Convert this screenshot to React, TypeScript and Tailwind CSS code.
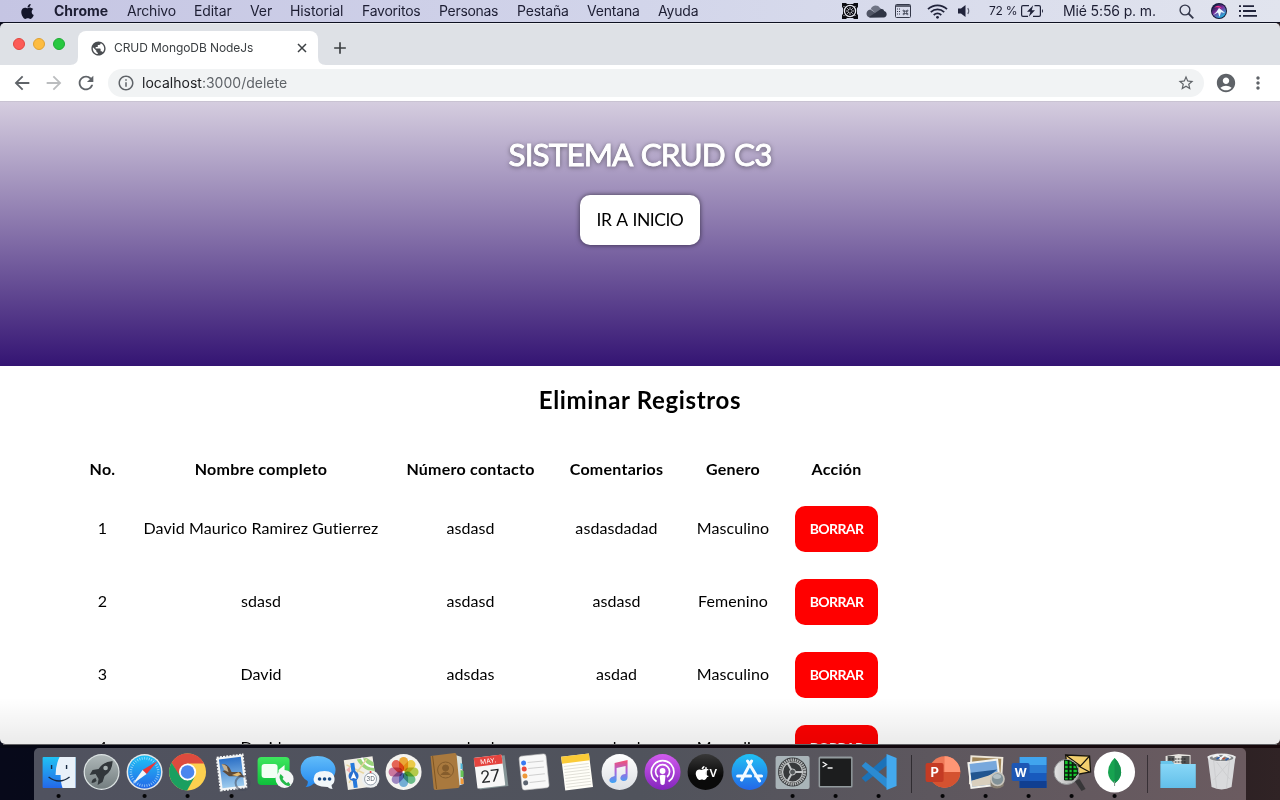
import type { ReactNode } from 'react';
import { FaApple } from 'react-icons/fa';
import {
  MdPublic, MdArrowBack, MdArrowForward, MdRefresh, MdInfoOutline, MdStarBorder,
  MdAccountCircle, MdMoreVert, MdAdd,
} from 'react-icons/md';

const menus = [
  { label: 'Archivo', cls: 'w-[67px] tracking-[-0.2px]' },
  { label: 'Editar', cls: 'w-[56px] tracking-[-0.1px]' },
  { label: 'Ver', cls: 'w-[40px] tracking-[-0.1px]' },
  { label: 'Historial', cls: 'w-[72px] tracking-[-0.1px]' },
  { label: 'Favoritos', cls: 'w-[77px] tracking-[-0.25px]' },
  { label: 'Personas', cls: 'w-[78px] tracking-[-0.3px]' },
  { label: 'Pestaña', cls: 'w-[70px] tracking-[-0.2px]' },
  { label: 'Ventana', cls: 'w-[71px] tracking-[-0.2px]' },
  { label: 'Ayuda', cls: 'w-[60px] tracking-[-0.2px]' },
];

function MenuBar() {
  return (
    <div className="flex h-[22px] shrink-0 items-center bg-linear-to-r from-[#c5c5e3] via-[#d2d5ea] to-[#e1e4ee] text-[14px] leading-[22px] text-[#1d1e33]">
      <div className="flex w-[54px] shrink-0 pl-[20px]">
        <FaApple className="h-[17px] w-[15px] text-[#14162a]" />
      </div>
      <div className="w-[73px] shrink-0 font-bold">Chrome</div>
      {menus.map((m) => (
        <div key={m.label} className={`shrink-0 whitespace-nowrap ${m.cls}`}>{m.label}</div>
      ))}
      <div className="flex flex-1 items-center">
        <svg className="ml-[124px] h-4 w-4 shrink-0" viewBox="0 0 16 16">
          <path d="M0 0h4l1 1h6l1-1h4v4l-1 1v6l1 1v4h-4l-1-1H5l-1 1H0v-4l1-1V5L0 4z" fill="#0c0c12" />
          <circle cx="8" cy="8" r="5.600" fill="none" stroke="#e8e9f2" strokeWidth="1.300" />
          <path d="M8 4v8M4 8h8M5.200 5.200l5.600 5.600M10.800 5.200l-5.600 5.600" stroke="#e8e9f2" strokeWidth=".8" />
          <path d="M1.500 4l1-1M13.500 4l-1-1M1.500 12l1 1M13.500 12l-1 1" stroke="#e8e9f2" strokeWidth=".8" />
          <circle cx="8" cy="8" r="1.300" fill="#0c0c12" />
        </svg>
        <svg className="ml-[8px] h-[14px] w-[21px] shrink-0" viewBox="0 0 21 14">
          <path d="M4.800 5C6 .8 12 .2 14 4l3 2-5 5z" fill="#6f7484" />
          <path d="M4 13.500C-.6 13-.8 6.500 4.300 5.500L16 13z" fill="#505565" />
          <path d="M3 13l12-8c2-.2 2.900.700 3.100 2 4 1 3 6.500-.5 6.500H4z" fill="#2f3444" />
        </svg>
        <svg className="ml-[8px] h-[14px] w-4 shrink-0" viewBox="0 0 16 14" fill="none" stroke="#343849">
          <rect x=".5" y=".5" width="15" height="13" rx="1" />
          <path d="M1 2h14" strokeWidth="1.500" />
          <path d="M2 5h4M2 7.500h3M2 10h3" strokeDasharray="1 1" />
          <path d="M9.300 7.200h2.400v2.400H9.300z" strokeWidth=".8" />
          <path d="M9.300 7.200H8.100a.7.700 0 1 1 1.200-.8zM11.700 7.200v-.8a.7.700 0 1 1 1.200.8zM9.300 9.600v.8a.7.700 0 1 1-1.200-.8zM11.700 9.600h1.200a.7.700 0 1 1-1.200.8z" strokeWidth=".8" />
        </svg>
        <svg className="ml-[16px] h-[15px] w-[21px] shrink-0" viewBox="0 0 21 15" fill="none" stroke="#20233a" strokeWidth="1.800">
          <path d="M1 5.200C6.500.2 14.500.2 20 5.200M3.800 8.100c4-3.600 9.400-3.600 13.400 0M6.700 11c2.300-2 5.300-2 7.600 0" />
          <circle cx="10.500" cy="13.300" r="1.400" fill="#20233a" stroke="none" />
        </svg>
        <svg className="ml-[9px] h-[14px] w-[16px] shrink-0" viewBox="0 0 16 14">
          <path d="M1 4.500h3L8.500 1v12L4 9.500H1z" fill="#20233a" />
          <path d="M10.800 4q2 3 0 6" fill="none" stroke="#5b5f70" strokeWidth="1.100" />
        </svg>
        <div className="ml-[16px] w-[32px] shrink-0 whitespace-nowrap text-[12px] tracking-[-0.25px]">72 %</div>
        <svg className="h-3 w-[23px] shrink-0" viewBox="0 0 23 12">
          <path d="M8 .6H2Q.6.600.6 2v8q0 1.400 1.400 1.400h5M13.500.6H18q1.400 0 1.400 1.400v8q0 1.400-1.400 1.400h-6" fill="none" stroke="#20233a" strokeWidth="1.200" />
          <path d="M12.200.3 6 6.700h3.400L7.800 11.700 14 5.200h-3.300z" fill="#20233a" />
          <path d="M21 4q2 2 0 4z" fill="#20233a" />
        </svg>
        <div className="ml-[19px] w-[116px] shrink-0 whitespace-nowrap tracking-[-0.13px]">Mié 5:56 p. m.</div>
        <svg className="h-[15px] w-[15px] shrink-0" viewBox="0 0 15 15" fill="none" stroke="#33374a" strokeWidth="1.400">
          <circle cx="6" cy="6" r="4.900" /><path d="M9.500 9.500 14.300 14.300" strokeWidth="1.800" />
        </svg>
        <svg className="ml-[17px] h-4 w-4 shrink-0" viewBox="0 0 16 16">
          <defs>
            <linearGradient id="siri" x1="0" y1="0" x2=".7" y2="1">
              <stop offset=".2" stopColor="#1d2050" /><stop offset=".5" stopColor="#7b2f9c" /><stop offset="1" stopColor="#20bbe0" />
            </linearGradient>
          </defs>
          <circle cx="8" cy="8" r="8" fill="#14183a" />
          <circle cx="8" cy="8" r="7" fill="url(#siri)" />
          <path d="M3 4.500q5-4 8 1-4-2-8-1z" fill="#ee328c" />
          <path d="M8 5q4 3 6 5l-4-.8L8.500 14 7 9.500 2 12q4-3 6-7z" fill="#e9f8ff" />
        </svg>
        <svg className="ml-[12px] h-[12px] w-[18px] shrink-0" viewBox="0 0 18 12" fill="none" stroke="#20233a">
          <path d="M0 1.200h2M4 1.200h11M0 6h2M4 6h13M0 10.800h2M4 10.800h14" strokeWidth="1.800" />
        </svg>
      </div>
    </div>
  );
}

function TabStrip() {
  return (
    <div className="flex h-[42px] shrink-0 items-end rounded-t-[5px] border-t border-[#eceef0] bg-[#dee1e6]">
      <div className="flex h-full w-[70px] shrink-0 gap-2 pt-[14px] pl-[13px]">
        <span className="h-3 w-3 rounded-full border border-[#e2463f] bg-[#fc5b57]" />
        <span className="h-3 w-3 rounded-full border border-[#dfa133] bg-[#fdbc40]" />
        <span className="h-3 w-3 rounded-full border border-[#1fab34] bg-[#28c840]" />
      </div>
      <svg className="h-2 w-2 shrink-0" viewBox="0 0 8 8"><path d="M8 0v8H0q8 0 8-8z" fill="#fff" /></svg>
      <div className="flex h-[34px] w-[240px] shrink-0 items-center rounded-t-[8px] bg-white text-[12px] text-[#3c4043]">
        <MdPublic className="ml-3 h-[17px] w-[17px] shrink-0 text-[#4a4d51]" />
        <span className="ml-[7px] flex-1 whitespace-nowrap tracking-[-0.08px]">CRUD MongoDB NodeJs</span>
        <svg className="mr-[11px] h-[10px] w-[10px]" viewBox="0 0 10 10"><path d="M1 1l8 8M9 1l-8 8" stroke="#3c4043" strokeWidth="1.500" /></svg>
      </div>
      <svg className="h-2 w-2 shrink-0" viewBox="0 0 8 8"><path d="M0 0v8h8q-8 0-8-8z" fill="#fff" /></svg>
      <MdAdd className="mb-[7px] ml-[4px] h-[20px] w-[20px] shrink-0 text-[#3c4043]" />
    </div>
  );
}

function Toolbar() {
  return (
    <div className="flex h-9 shrink-0 items-center bg-white text-[#5f6368]">
      <MdArrowBack className="ml-[11px] h-[22px] w-[22px] shrink-0" />
      <MdArrowForward className="ml-[10px] h-[22px] w-[22px] shrink-0 text-[#bbbdbf]" />
      <MdRefresh className="ml-[10px] h-[22px] w-[22px] shrink-0" />
      <div className="ml-[11px] flex h-7 w-[1096px] shrink-0 items-center rounded-full bg-[#f1f3f4] text-[14px]">
        <MdInfoOutline className="ml-[9px] h-[18px] w-[18px]" />
        <div className="ml-[7px] flex-1 pb-px tracking-[0.01px]"><span className="text-[#202124]">localhost</span>:3000/delete</div>
        <MdStarBorder className="mr-[9px] h-[18px] w-[18px]" />
      </div>
      <MdAccountCircle className="ml-[11px] h-[22px] w-[22px] shrink-0" />
      <MdMoreVert className="ml-[11px] h-5 w-5 shrink-0" />
    </div>
  );
}

const rows = [
  ['1', 'David Maurico Ramirez Gutierrez', 'asdasd', 'asdasdadad', 'Masculino'],
  ['2', 'sdasd', 'asdasd', 'asdasd', 'Femenino'],
  ['3', 'David', 'adsdas', 'asdad', 'Masculino'],
  ['4', 'David', 'asdasd', 'asdasd', 'Masculino'],
];

function Page() {
  return (
    <main className="relative flex h-[643px] shrink-0 flex-col overflow-hidden rounded-b-[5px] bg-white font-['Lato','Noto_Sans',sans-serif] text-black [font-variant-ligatures:none]">
      <header className="flex h-[265px] shrink-0 flex-col items-center border-t border-[#c9c3d2] bg-linear-to-b/srgb from-[#d5cddf] to-[#341473]">
        <h1 className="mt-[32px] h-[40px] text-[31.5px] leading-[40px] tracking-[-0.9px] whitespace-nowrap text-white [-webkit-text-stroke:0.9px_white] [text-shadow:0_1px_5px_rgba(0,0,0,0.6)] [word-spacing:2px]">SISTEMA CRUD C3</h1>
        <button className="mt-[21px] h-[50px] w-[120px] rounded-[10px] bg-white text-[17.5px] tracking-[-0.5px] whitespace-nowrap shadow-[0_0_5px_rgba(0,0,0,0.6)] [word-spacing:1.5px]">IR A INICIO</button>
      </header>
      <h2 className="mt-[18px] h-8 shrink-0 text-center text-[24px] leading-8 font-bold tracking-[0.65px]">Eliminar Registros</h2>
      <div className="mt-[30px] ml-[76px] text-[16px]">
        <div className="grid h-[46px] grid-cols-[53px_264px_155px_137px_96px_111px] items-center text-center font-bold tracking-[0.25px]">
          {['No.', 'Nombre completo', 'Número contacto', 'Comentarios', 'Genero', 'Acción'].map((h) => <div key={h}>{h}</div>)}
        </div>
        {rows.map((r) => (
          <div key={r[0]} className="grid h-[73px] grid-cols-[53px_264px_155px_137px_96px_111px] items-center text-center">
            {r.map((c, i) => <div key={i} className="pb-[2px] tracking-[0.08px] whitespace-nowrap">{c}</div>)}
            <div className="flex justify-center pt-px">
              <button className="h-[46px] w-[83px] rounded-[10px] bg-[#ff0000] pb-[2px] text-[14px] font-bold tracking-[-0.6px] text-white">BORRAR</button>
            </div>
          </div>
        ))}
      </div>
      <div className="pointer-events-none absolute inset-x-0 bottom-0 h-[46px] bg-linear-to-b from-black/0 to-black/8" />
    </main>
  );
}

function Icon({ children, dot }: { children: ReactNode; dot?: boolean }) {
  return (
    <svg className="h-[52px] w-[43.17px] shrink-0 overflow-visible" viewBox="-21.6 -24 43.2 52">
      {children}
      {dot && <circle cx="0" cy="24" r="2.100" fill="#050507" />}
    </svg>
  );
}

const petals = ['#f5a623', '#f4d03a', '#b5cf3b', '#5fbf84', '#6aaee0', '#9a82c8', '#cf6fa0', '#ee5a4a'];
const spokes = Array.from({ length: 36 }, (_, i) => i * 10);

function Dock() {
  return (
    <div className="flex h-[52px] w-[1212px] shrink-0 rounded-t-[5px] bg-linear-to-r from-[#50525f] via-[#50535c] to-[#6b5b60] pl-[3px] font-['Inter',sans-serif]">
      <svg className="h-0 w-0 shrink-0">
        <defs>
          <linearGradient id="silver" x2="0" y2="1"><stop stopColor="#aeb7b8" /><stop offset="1" stopColor="#747e80" /></linearGradient>
          <linearGradient id="blue" x2="0" y2="1"><stop stopColor="#20c2f4" /><stop offset="1" stopColor="#2468e8" /></linearGradient>
          <linearGradient id="bubble" x2="0" y2="1"><stop stopColor="#62bdfa" /><stop offset="1" stopColor="#2388ef" /></linearGradient>
          <linearGradient id="green" x2="0" y2="1"><stop stopColor="#3ee75e" /><stop offset="1" stopColor="#0fc03b" /></linearGradient>
          <linearGradient id="purple" x2="0" y2="1"><stop stopColor="#d15bee" /><stop offset="1" stopColor="#8425bd" /></linearGradient>
          <linearGradient id="note" x2="0" y2="1"><stop stopColor="#f64f70" /><stop offset=".5" stopColor="#a765de" /><stop offset="1" stopColor="#3ba6f5" /></linearGradient>
          <linearGradient id="folder" x2="0" y2="1"><stop stopColor="#88d7f7" /><stop offset="1" stopColor="#62bfe9" /></linearGradient>
          <linearGradient id="white" x2="0" y2="1"><stop stopColor="#fff" /><stop offset="1" stopColor="#dcdfe4" /></linearGradient>
          <linearGradient id="sky" x2="0" y2="1"><stop stopColor="#2c70c6" /><stop offset="1" stopColor="#9ccbee" /></linearGradient>
          <linearGradient id="black" x2="0" y2="1"><stop stopColor="#383838" /><stop offset=".6" stopColor="#0a0a0a" /></linearGradient>
          <linearGradient id="lens" x2="1" y2="0"><stop stopColor="#e4e4e4" /><stop offset="1" stopColor="#a6a8a8" /></linearGradient>
        </defs>
      </svg>
      <Icon dot>
        <rect x="-16" y="-15" width="33" height="31" rx="1" fill="url(#blue)" />
        <path d="M1-15h16v31H4Q2 11 2 3h-5q0-10 4-18z" fill="#e9f1f9" />
        <path d="M-7-7v4M8-7v4" stroke="#172a42" strokeWidth="1.400" />
        <path d="M-10 5q10.500 8 21 0" fill="none" stroke="#17283e" strokeWidth="1.400" />
      </Icon>
      <Icon>
        <circle r="18" fill="#dce3e3" /><circle r="16.800" fill="url(#silver)" />
        <path d="M11-11q-10 1-14 8l-6 1-3 5 6-1 3 5-1 6 5-3 2-6q8-5 8-15z" fill="#32373b" />
        <circle cx="4" cy="-4" r="2.300" fill="#a7b0b1" /><path d="M-10 11q0-4 4-5l1 3q-2 2-5 2z" fill="#32373b" />
      </Icon>
      <Icon dot>
        <circle r="18" fill="#e5e8e9" /><circle r="16.500" fill="url(#blue)" />
        {spokes.map((a) => <path key={a} d="M0-15v2.500" stroke="#c7ecff" strokeWidth=".6" transform={`rotate(${a})`} />)}
        <path d="M13-11 2 2l-4-4z" fill="#ed3434" /><path d="M-12 12-2-2l4 4z" fill="#f2f5f7" />
      </Icon>
      <Icon dot>
        <circle r="18.500" fill="#fcd04f" />
        <path d="M-16-9.200A18.500 18.500 0 0 1 16.500-8.500H0L-8 5z" fill="#dd4b3e" />
        <path d="M-16-9.200-7 5 0 8.500 7 5-.5 18.500A18.500 18.500 0 0 1-16-9.200z" fill="#1a9f60" />
        <circle r="8.600" fill="#fff" /><circle r="6.800" fill="#4b86ee" />
      </Icon>
      <Icon dot>
        <g transform="rotate(-7)">
          <rect x="-13" y="-16" width="26" height="33" fill="#f3f5f5" stroke="#f3f5f5" strokeWidth="2" strokeDasharray="2 1.200" />
          <rect x="-11" y="-14" width="22" height="29" fill="url(#sky)" />
          <path d="M-9-9q7 0 9 9l9 1 3 6-7-2-8-1-6-6 5-1z" fill="#604b38" />
          <path d="M-9-9q3 0 5 3l1 6-4-3z" fill="#c0af93" /><path d="M0 3 7 1l2 3-4 1z" fill="#e3ba70" />
        </g>
        <circle cx="11" cy="11" r="7" fill="none" stroke="#454b59" strokeWidth="2" opacity=".55" />
      </Icon>
      <Icon>
        <rect x="-17" y="-15" width="32" height="28" rx="4" fill="url(#green)" />
        <rect x="-13" y="-8" width="16" height="14" rx="3" fill="#f2fff4" /><path d="m4-2 6-5v11L4 1z" fill="#f2fff4" />
        <circle cx="10" cy="7" r="9" fill="#f4f6f6" />
        <path d="m6 2 3 3-1 2 4 4 2-1 2 3q-3 3-8-2T6 2z" fill="#22ba49" />
      </Icon>
      <Icon>
        <path d="M0-16c10 0 18 6 18 14S10 12 0 12l-4-.5Q-7 15-12 15q3-3 2-6-7-4-7-11 0-14 17-14z" fill="url(#bubble)" />
        <path d="M7-1c6 0 10 3 10 8 0 3-1 5-3 6q0 2 1 4-3 0-5-2-14 0-14-8 0-8 11-8z" fill="#f2f7fa" />
        <g fill="#164a87"><circle cx="2" cy="7" r="1.800" /><circle cx="7" cy="7" r="1.800" /><circle cx="12" cy="7" r="1.800" /></g>
      </Icon>
      <Icon>
        <g transform="rotate(-8)">
          <rect x="-15" y="-14" width="29" height="30" fill="#f1eee5" />
          <path d="M-2-13q4 12 16 15V-8L8-13z" fill="#9bd57b" /><path d="M3-14q2 9 11 11" fill="none" stroke="#fff" strokeWidth="2" />
          <path d="M-13-9 14 9M-13 9 8-12" stroke="#e7d6a0" strokeWidth="1.500" /><path d="M-7-10v25" stroke="#2679db" strokeWidth="4" />
          <path d="m-14-4 4-3v7z" fill="#efb2b2" />
        </g>
        <circle cx="-7" cy="4" r="5" fill="#2870d0" /><path d="m-7 0 3 7-3-1-3 1z" fill="#fff" />
        <circle cx="10" cy="7" r="8.800" fill="#edf0f1" /><circle cx="10" cy="7" r="6" fill="#fff" stroke="#7b8794" strokeWidth=".8" />
        <text x="10" y="9.300" textAnchor="middle" fontSize="6.500" fill="#515b65">3D</text><circle cx="10" cy="0" r="1" fill="#e83a35" />
      </Icon>
      <Icon>
        <circle r="18" fill="#f4f3ef" />
        {petals.map((c, i) => <rect key={c} className="mix-blend-multiply" x="-4.500" y="-15" width="9" height="14" rx="4.500" fill={c} opacity=".9" transform={`rotate(${i * 45})`} />)}
      </Icon>
      <Icon>
        <path d="m6-18 9 3 2 27-9 3z" fill="#d9e2df" /><path d="m14-9 2 1v5h-2z" fill="#4db9dd" /><path d="m14-2 3 1v6h-3z" fill="#66c557" /><path d="m14 6 3 1v5h-3z" fill="#f39a39" />
        <path d="m-16-16 24-3q2 0 2 2l3 31q0 2-2 2l-22 2q-2 0-2-2z" fill="#a9793e" /><path d="m-14-16 4 33" stroke="#825621" />
        <g fill="none" stroke="#855c2c" transform="translate(-1 -2)"><circle r="8" /><circle cy="-2" r="3" fill="#855c2c" /><path d="M-5 5q5-6 10 0" fill="#855c2c" /></g>
      </Icon>
      <Icon>
        <g transform="rotate(-7)"><path d="M-13-15h29v31h-29z" fill="#849496" /><rect x="-15" y="-16" width="28" height="31" rx="1" fill="#f7f7f7" /><path d="M-15-16h28v9h-28z" fill="#e5443f" />
          <text y="-9" x="-1" textAnchor="middle" fontSize="6.500" fill="#fff">MAY.</text>
          <text y="10" x="-1" textAnchor="middle" fontSize="17" fill="#25282a">27</text></g>
      </Icon>
      <Icon>
        <g transform="rotate(-6)"><rect x="-13" y="-17" width="27" height="34" rx="2.500" fill="#f8f8f8" stroke="#c5c5c5" strokeWidth=".6" />
          <path d="M-5-10H11M-5-4H11M-5 3H11M-5 10H11" stroke="#cfcfcf" />
          <g><circle cx="-9" cy="-10" r="2.500" fill="#397af3" /><circle cx="-9" cy="-4" r="2.500" fill="#eb493f" /><circle cx="-9" cy="3" r="2.500" fill="#ee9838" /><circle cx="-9" cy="10" r="2.500" fill="#5c6470" /></g></g>
      </Icon>
      <Icon>
        <g transform="rotate(-7)"><rect x="-13.500" y="-17" width="28" height="34" fill="#fffef8" /><path d="M-13.500-17h28v7h-28z" fill="#fbcb37" />
          <path d="M-12-7h25M-12-4h25M-12-1h25M-12 2h25M-12 5h25M-12 8h25M-12 11h25M-12 14h25" stroke="#d6d5cd" strokeWidth=".7" /></g>
      </Icon>
      <Icon>
        <circle r="18" fill="url(#white)" />
        <path d="M-5-9 8-12V5q0 4-4 4-4-.5-3-4 1-3 5-3v-8l-9 2V8q0 3-4 3-4-.5-3-4 1-2 5-3z" fill="url(#note)" />
      </Icon>
      <Icon>
        <circle r="18" fill="url(#purple)" />
        <g fill="none" stroke="#fff" strokeWidth="1.700"><path d="M-6 9.500a11.300 11.300 0 1 1 12 0M-4.500 5a7 7 0 1 1 9 0" /></g>
        <circle cy="-1" r="2.900" fill="#fff" /><path d="M-3 3.500q3-1.500 6 0L2 12q-2 2-4 0z" fill="#fff" />
      </Icon>
      <Icon>
        <circle r="18" fill="url(#black)" />
        <FaApple x="-12" y="-7" width="10" height="12" color="#fff" />
        <text x="-1.500" y="4.500" fontSize="14" fontWeight="500" fill="#fff">tv</text>
      </Icon>
      <Icon>
        <circle r="18" fill="url(#blue)" />
        <path d="M2-11-8 8M-2-11 10 9M-12 4h13M6 4h6" stroke="#f4fbff" strokeWidth="3" strokeLinecap="round" />
      </Icon>
      <Icon dot>
        <rect x="-17" y="-16" width="34" height="33" rx="2" fill="#a9b4b8" /><circle r="14.500" fill="#343638" />
        <circle r="12.200" fill="#444" stroke="#b3b6b7" strokeWidth="3" strokeDasharray="1.400 .8" /><circle r="10" fill="#37393b" stroke="#c5c8c9" strokeWidth="1.200" />
        <path d="M0 0h10M0 0-5-9M0 0l-5 9" stroke="#c5c8c9" strokeWidth="2" /><circle r="3" fill="#54585a" stroke="#c5c8c9" />
      </Icon>
      <Icon dot>
        <rect x="-17" y="-15.500" width="34" height="31" rx="1.500" fill="#929a9d" /><rect x="-15.500" y="-13.500" width="31" height="27.500" fill="#1c1d1e" />
        <path d="m-13-10 4 2.500-4 2.500M-8-4h5" stroke="#f4f4f4" fill="none" strokeWidth="1.300" />
      </Icon>
      <Icon dot>
        <path d="m-17 6 4 4L9-7v-10z" fill="#1b72b8" />
        <path d="m-17-6 4-4L9 7v10z" fill="#2b8bd2" />
        <path d="m8-18 10 4v28L8 18z" fill="#43a9ee" />
      </Icon>
      <div className="flex w-[20.6px] shrink-0 justify-center pt-[7px] pl-[2px]"><div className="h-[38px] w-px bg-[#302c31]" /></div>
      <Icon dot>
        <circle cx="2" r="15.700" fill="#ed7857" /><path d="M2-15.700A15.700 15.700 0 0 1 17.700 0H2z" fill="#ff9675" /><path d="M-13.700 0h31.400A15.700 15.700 0 0 1-13.700 0z" fill="#d45230" />
        <rect x="-17" y="-9" width="18" height="19" rx="2" fill="#c43b24" /><text x="-8" y="5" textAnchor="middle" fontSize="13" fontWeight="700" fill="#fff">P</text>
      </Icon>
      <Icon dot>
        <g transform="rotate(3)"><rect x="-16" y="-16" width="33" height="29" fill="#eee7d9" /><rect x="-14" y="-14" width="29" height="24" fill="#a08557" /></g>
        <g transform="rotate(-7)"><rect x="-17" y="-12" width="31" height="27" fill="#f3f2ed" /><path d="M-15-10h27v23h-27z" fill="#78a8dc" /><path d="M-15-1h27l-10 6-17 2z" fill="#235690" /><path d="m-15 7 17-3 10-3v12h-27z" fill="#d9cfbd" /></g>
        <path d="M5 8v6q6 5 13 0V8z" fill="#877e70" /><circle cx="12" cy="7" r="6.500" fill="#829298" stroke="#c7c4bc" strokeWidth="1.600" /><ellipse cx="11.500" cy="4.500" rx="4" ry="2.500" fill="#b3c0c5" />
      </Icon>
      <Icon dot>
        <path d="M-9-15h27v31H-9z" fill="#185abd" /><path d="M-9-15h27v8H-9z" fill="#41a5ee" /><path d="M-9-7h27v8H-9z" fill="#2b7cd3" /><path d="M-9 9h27v7H-9z" fill="#103f91" />
        <rect x="-17" y="-9" width="18" height="18" rx="2" fill="#1d57b4" /><text x="-8" y="4.500" textAnchor="middle" fontSize="12" fontWeight="700" fill="#fff">W</text>
      </Icon>
      <Icon dot>
        <path d="m-6-17 24 1 1 16-22 4z" fill="#f2cf6d" stroke="#17150e" strokeWidth="1.300" /><path d="m-6-17 15 11 9-10M-3 3 5-7l13 7" fill="none" stroke="#17150e" strokeWidth="1.200" />
        <path d="m3 9 5-2 6 10-4 2z" fill="#373638" /><circle cx="-5" cy="0" r="12.500" fill="url(#lens)" stroke="#949698" strokeWidth="1" />
        <path d="M-7-12q14 1 13 14l-5 6-8 0z" fill="#14c72c" stroke="#0b180c" /><path d="M-3-12V8M1-10V8M-7-7H5M-7-3H6M-7 1H7M-7 5H4" stroke="#091a0b" strokeWidth="1.700" />
      </Icon>
      <Icon dot>
        <circle r="20.500" fill="#fff" /><path d="M0-14Q-7-7-6.500 1-6 7 0 11.500 6 7 6.500 1 7-7 0-14z" fill="#17a350" /><path d="M0-14Q7-7 6.500 1 6 7 0 11.500z" fill="#13914b" /><path d="M0 9v5" stroke="#7b9386" />
      </Icon>
      <div className="flex w-[20.2px] shrink-0 justify-center pt-[7px] pl-[2px]"><div className="h-[38px] w-px bg-[#373035]" /></div>
      <Icon>
        <path d="M-13-16 0-18l12 1v9h-25z" fill="#e4e2dd" /><path d="M-11-16h7v5h-7zM3-16h8v8H3z" fill="#555" /><path d="M-10-13H8M-10-10H8" stroke="#222" strokeDasharray="2 1" />
        <path d="M-18-11h11l3 3h21v24h-35z" fill="#68c5eb" /><path d="M-18-8h35v24h-35z" fill="url(#folder)" />
      </Icon>
      <Icon>
        <path d="m-14-16 4 31q10 5 20 0l4-31z" fill="#d9dadc" /><path d="m-8-12 3 28M8-12 5 16M-5-10 8 7M7-9-8 8" stroke="#cdced0" />
        <ellipse cy="-14.500" rx="14" ry="4" fill="#e8e9ea" /><ellipse cy="-14" rx="12" ry="3" fill="#858789" /><path d="m-9-15 5-2 3 4 4-4 6 3" stroke="#f4f4f4" fill="none" strokeWidth="2" /><path d="m-5-13 3-2M4-12l3-2" stroke="#285db1" strokeWidth="1.500" /><path d="m1-13 2-1" stroke="#bf4b32" strokeWidth="1.500" />
      </Icon>
    </div>
  );
}

export default function App() {
  return (
    <div className="flex h-[800px] w-[1280px] flex-col overflow-hidden bg-linear-to-r from-[#07091a] via-[#08090f] to-[#302325] font-['Inter',sans-serif]">
      <MenuBar />
      <div className="h-px shrink-0 bg-[#0d1021]" />
      <TabStrip />
      <Toolbar />
      <Page />
      <div className="mx-[3px] h-px shrink-0 bg-[#606063]" />
      <div className="h-[3px] shrink-0 bg-linear-to-r from-[#050713] to-[#18090c]" />
      <div className="flex justify-center"><Dock /></div>
    </div>
  );
}
